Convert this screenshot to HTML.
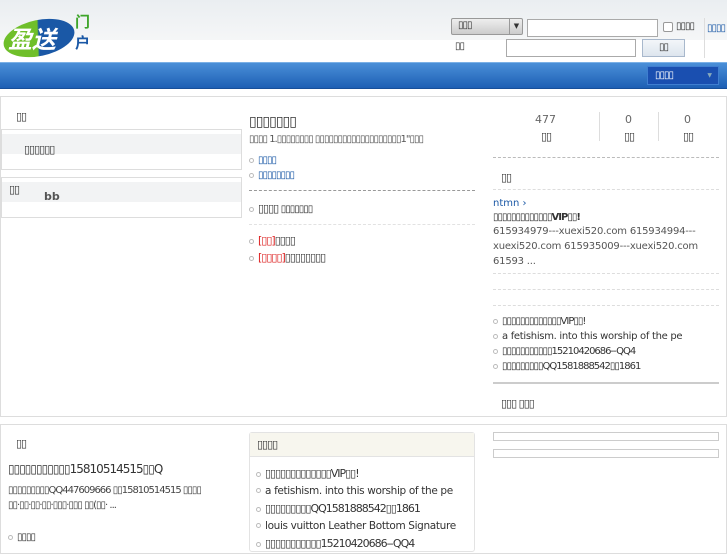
<!DOCTYPE html>
<html><head><meta charset="utf-8"><style>
*{margin:0;padding:0;box-sizing:border-box}
body{width:727px;height:545px;overflow:hidden;background:#fff;font-family:"DejaVu Sans","Liberation Sans","Noto Sans CJK SC",sans-serif;font-size:11px;color:#333;position:relative}
.a{position:absolute}
.t{letter-spacing:-1px}
.dash{border-top:1px dashed #ccc}
.dot{display:inline-block;width:5px;height:5px;border-radius:50%;border:1px solid #bbb;margin-right:4px;vertical-align:middle}
</style></head><body>
<div class="a" style="left:0;top:0;width:727px;height:40px;background:linear-gradient(#eaeef1,#f5f6f7)"></div>
<!-- logo -->
<div class="a" style="left:3px;top:20px;width:72px;height:36px;border-radius:50%;background:linear-gradient(100deg,#6fbf2a 0 48%,#1a58a6 50%);transform:rotate(-12deg)"></div>
<div class="a" style="left:8px;top:22px;font:bold italic 24px 'Noto Sans CJK SC',sans-serif;color:#fff;line-height:32px">盈送</div>
<div class="a" style="left:75px;top:12px;font:bold 15px 'Noto Sans CJK SC',sans-serif;color:#3ea52a;line-height:20px">门</div>
<div class="a" style="left:75px;top:33px;font:bold 15px 'Noto Sans CJK SC',sans-serif;color:#1a58a6;line-height:20px">户</div>
<!-- search -->
<div class="a" style="left:451px;top:18px;width:72px;height:17px;border:1px solid #999;border-radius:2px;background:linear-gradient(#eee,#ccc)"></div>
<div class="a t" style="left:458px;top:20px;font-size:10px">▯▯▯</div>
<div class="a" style="left:509px;top:18px;width:14px;height:17px;border-left:1px solid #999;font-size:7px;text-align:center;line-height:16px">▼</div>
<div class="a" style="left:527px;top:19px;width:131px;height:18px;border:1px solid #aaa;background:#fff"></div>
<div class="a" style="left:663px;top:22px;width:10px;height:10px;border:1px solid #999;border-radius:2px;background:#fff"></div>
<div class="a t" style="left:676px;top:21px;font-size:10px">▯▯▯▯</div>
<div class="a" style="left:704px;top:18px;height:40px;border-left:1px solid #ddd"></div>
<div class="a t" style="left:707px;top:23px;font-size:10px;color:#1a58a6">▯▯▯▯</div>
<div class="a t" style="left:455px;top:41px;font-size:10px">▯▯</div>
<div class="a" style="left:506px;top:39px;width:130px;height:18px;border:1px solid #aaa;background:#fff"></div>
<div class="a t" style="left:642px;top:39px;width:43px;height:18px;border:1px solid #a8b8cc;background:linear-gradient(#f3f6f9,#dde5ee);text-align:center;line-height:16px;font-size:10px">▯▯</div>
<!-- blue bar -->
<div class="a" style="left:0;top:62px;width:727px;height:27px;background:linear-gradient(#4a8fd8,#1d5fb4);border-top:1px solid #7bb0e6;border-bottom:1px solid #174f99"></div>
<div class="a t" style="left:647px;top:66px;width:72px;height:19px;background:#1a4fb0;border:1px solid #3f7ed0;color:#fff;font-size:10px;line-height:17px;padding-left:7px">▯▯▯▯<span style="position:absolute;right:7px;font-size:6px;color:#8ab">▼</span></div>
<!-- main box -->
<div class="a" style="left:0;top:96px;width:727px;height:321px;border:1px solid #ddd"></div>
<div class="a t" style="left:16px;top:110px">▯▯</div>
<div class="a" style="left:1px;top:129px;width:241px;height:41px;border:1px solid #ddd;background:linear-gradient(#fff 0 4px,#f2f3f4 4px 24px,#fff 24px)"></div>
<div class="a t" style="left:24px;top:143px">▯▯▯▯▯▯</div>
<div class="a" style="left:1px;top:177px;width:241px;height:41px;border:1px solid #ddd;background:linear-gradient(#fff 0 4px,#f2f3f4 4px 24px,#fff 24px)"></div>
<div class="a t" style="left:9px;top:183px">▯▯</div>
<div class="a" style="left:44px;top:190px;font-size:11px;font-weight:bold;color:#555">bb</div>
<!-- center -->
<div class="a t" style="left:249px;top:114px;font-size:14px">▯▯▯▯▯▯▯</div>
<div class="a t" style="left:249px;top:134px;font-size:10px;color:#555;white-space:nowrap">▯▯▯▯ 1.▯▯▯▯▯▯▯▯ ▯▯▯▯▯▯▯▯▯▯▯▯▯▯▯▯▯▯▯1"▯▯▯</div>
<div class="a t" style="left:249px;top:155px;color:#1a58a6;font-size:10px"><span class="dot"></span>▯▯▯▯</div>
<div class="a t" style="left:249px;top:170px;color:#1a58a6;font-size:10px"><span class="dot"></span>▯▯▯▯▯▯▯▯</div>
<div class="a dash" style="left:249px;top:190px;width:226px;border-color:#999"></div>
<div class="a t" style="left:249px;top:202px"><span class="dot"></span>▯▯▯▯ <span style="font-size:10px">▯▯▯▯▯▯▯</span></div>
<div class="a dash" style="left:249px;top:224px;width:226px;border-color:#e2e2e2"></div>
<div class="a t" style="left:249px;top:234px"><span class="dot"></span><span style="color:#d22">[▯▯]</span>▯▯▯▯</div>
<div class="a t" style="left:249px;top:251px"><span class="dot"></span><span style="color:#d22">[▯▯▯▯]</span>▯▯▯▯▯▯▯▯</div>
<!-- right -->
<div class="a" style="left:535px;top:113px;color:#666">477</div>
<div class="a" style="left:625px;top:113px;color:#666">0</div>
<div class="a" style="left:684px;top:113px;color:#666">0</div>
<div class="a t" style="left:541px;top:130px">▯▯</div>
<div class="a t" style="left:624px;top:130px">▯▯</div>
<div class="a t" style="left:683px;top:130px">▯▯</div>
<div class="a" style="left:599px;top:112px;height:29px;border-left:1px solid #ddd"></div>
<div class="a" style="left:658px;top:112px;height:29px;border-left:1px solid #ddd"></div>
<div class="a dash" style="left:493px;top:157px;width:226px;border-color:#bbb"></div>
<div class="a t" style="left:501px;top:171px">▯▯</div>
<div class="a dash" style="left:493px;top:189px;width:226px;border-color:#ddd"></div>
<div class="a" style="left:493px;top:198px;color:#1a58a6;font-size:10px">ntmn ›</div>
<div class="a t" style="left:493px;top:212px;font-size:10px;font-weight:bold">▯▯▯▯▯▯▯▯▯▯▯▯▯VIP▯▯!</div>
<div class="a" style="left:493px;top:224px;font-size:10px;color:#555;line-height:15px;width:226px;letter-spacing:-0.2px">615934979---xuexi520.com 615934994---xuexi520.com 615935009---xuexi520.com 61593 ...</div>
<div class="a dash" style="left:493px;top:273px;width:226px;border-color:#ddd"></div>
<div class="a dash" style="left:493px;top:289px;width:226px;border-color:#ddd"></div>
<div class="a dash" style="left:493px;top:305px;width:226px;border-color:#ddd"></div>
<div class="a t" style="left:493px;top:314px;font-size:10px;line-height:15px;white-space:nowrap">
<div><span class="dot"></span>▯▯▯▯▯▯▯▯▯▯▯▯▯VIP▯▯!</div>
<div style="letter-spacing:-0.3px"><span class="dot"></span>a fetishism. into this worship of the pe</div>
<div><span class="dot"></span>▯▯▯▯▯▯▯▯▯▯▯15210420686--QQ4</div>
<div><span class="dot"></span>▯▯▯▯▯▯▯▯▯QQ1581888542▯▯1861</div></div>
<div class="a" style="left:493px;top:382px;width:226px;border-top:2px solid #ccc"></div>
<div class="a t" style="left:501px;top:397px">▯▯▯ ▯▯▯</div>
<!-- bottom box -->
<div class="a" style="left:0;top:424px;width:727px;height:130px;border:1px solid #ddd"></div>
<div class="a t" style="left:16px;top:437px">▯▯</div>
<div class="a t" style="left:8px;top:462px;font-size:12px;white-space:nowrap">▯▯▯▯▯▯▯▯▯▯▯15810514515▯▯Q</div>
<div class="a t" style="left:8px;top:483px;font-size:10px;color:#444;line-height:15px;width:235px">▯▯▯▯▯▯▯▯▯QQ447609666 ▯▯15810514515 ▯▯▯▯ ▯▯·▯▯·▯▯·▯▯·▯▯▯·▯▯▯ ▯▯(▯▯· ...</div>
<div class="a t" style="left:8px;top:532px;font-size:10px"><span class="dot"></span>▯▯▯▯</div>
<div class="a" style="left:249px;top:432px;width:226px;height:120px;border:1px solid #e3e3e3;border-radius:3px"></div>
<div class="a t" style="left:250px;top:433px;width:224px;height:24px;background:#f7f6ee;border-bottom:1px solid #e3e3e3;padding:5px 7px">▯▯▯▯</div>
<div class="a t" style="left:256px;top:465px;font-size:11px;line-height:17.5px;white-space:nowrap">
<div><span class="dot"></span>▯▯▯▯▯▯▯▯▯▯▯▯▯VIP▯▯!</div>
<div style="letter-spacing:-0.35px;font-size:10.5px"><span class="dot"></span>a fetishism. into this worship of the pe</div>
<div><span class="dot"></span>▯▯▯▯▯▯▯▯▯QQ1581888542▯▯1861</div>
<div style="letter-spacing:-0.35px;font-size:10.5px"><span class="dot"></span>louis vuitton Leather Bottom Signature</div>
<div><span class="dot"></span>▯▯▯▯▯▯▯▯▯▯▯15210420686--QQ4</div></div>
<div class="a" style="left:493px;top:432px;width:226px;height:9px;border:1px solid #ccc"></div>
<div class="a" style="left:493px;top:449px;width:226px;height:9px;border:1px solid #ccc"></div>
</body></html>
